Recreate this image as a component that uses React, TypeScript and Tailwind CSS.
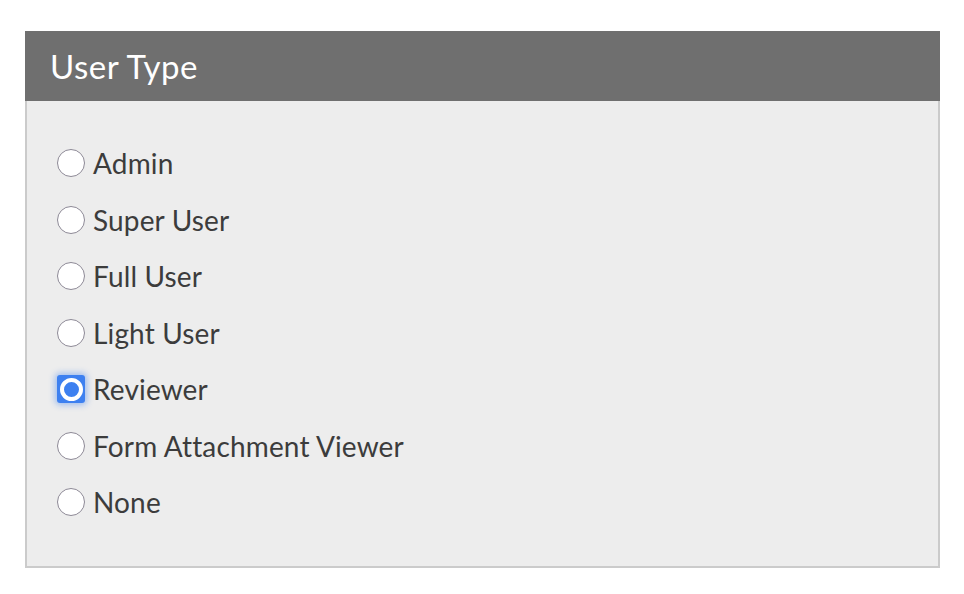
import { useState } from 'react';

const OPTIONS = [
  'Admin',
  'Super User',
  'Full User',
  'Light User',
  'Reviewer',
  'Form Attachment Viewer',
  'None',
];

/**
 * 사용자 유형 선택 카드
 */
const App = () => {
  const [selected, setSelected] = useState('Reviewer');

  return (
    <div className="min-h-screen bg-white pt-[31px] pl-[25px] font-['Lato','Open_Sans',sans-serif]">
      <div className="w-[915px]">
        {/* 헤더 */}
        <div className="flex h-[70px] items-center bg-[#6f6f6f] px-[25px]">
          <h2 className="text-[33px] leading-none tracking-[0.5px] text-white">User Type</h2>
        </div>

        {/* 본문 */}
        <div className="border-x-2 border-b-2 border-[#cbcbcb] bg-[#ededed] pt-[34px] pb-[35px] pl-[30px]">
          {OPTIONS.map((opt) => {
            const checked = selected === opt;
            return (
              <label
                key={opt}
                className="flex h-[56.5px] cursor-pointer items-center gap-[8px]"
                onClick={() => setSelected(opt)}
              >
                {checked ? (
                  <span className="flex h-[28px] w-[28px] items-center justify-center rounded-[3px] bg-[#3d80f0] shadow-[0_0_6px_2px_rgba(61,128,240,0.45)]">
                    <span className="h-[23px] w-[23px] rounded-full border-[4px] border-white bg-[#3d80f0]" />
                  </span>
                ) : (
                  <span className="h-[28px] w-[28px] rounded-full border-[1.5px] border-[#8d8996] bg-white" />
                )}
                <span className="text-[28px] leading-none tracking-[0.15px] text-[#3c3c3c]">{opt}</span>
              </label>
            );
          })}
        </div>
      </div>
    </div>
  );
};

export default App;
